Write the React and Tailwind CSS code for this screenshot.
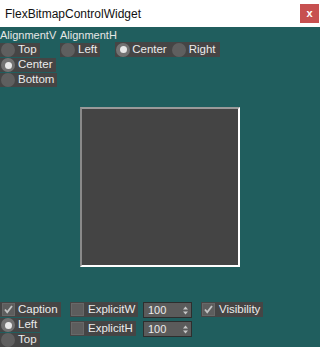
import React from 'react';

const font = "font-['Liberation_Sans',Arial,sans-serif]";

const Radio = ({ checked }) => (
    <span className={`w-[14px] h-[14px] rounded-full flex items-center justify-center shrink-0 ${checked ? 'bg-[#727272]' : 'bg-[#5f5f5f]'}`}>
        {checked && <span className="w-[7px] h-[7px] rounded-full bg-[#e8e8e8]" />}
    </span>
);

const Check = ({ checked }) => (
    <span className="w-[13px] h-[13px] bg-[#5d5d5d] border border-[#686868] flex items-center justify-center shrink-0">
        {checked && (
            <svg width="11" height="11" viewBox="0 0 11 11">
                <path d="M2 5.5 L4.2 8.3 L9 2" fill="none" stroke="#c4c4c4" strokeWidth="1.8" />
            </svg>
        )}
    </span>
);

const RadioItem = ({ label, checked }) => (
    <div className="h-[14px] flex items-center gap-[3px] pl-px pr-[3px] bg-[#454545] w-fit">
        <Radio checked={checked} />
        <span className="text-[11.5px] text-[#ececec] leading-none">{label}</span>
    </div>
);

const CheckItem = ({ label, checked }) => (
    <div className="h-[15px] flex items-center gap-[4px] pl-px pr-[3px] bg-[#454545] w-fit">
        <Check checked={checked} />
        <span className="text-[11.5px] text-[#ececec] leading-none">{label}</span>
    </div>
);

const SpinBox = ({ value }) => (
    <div className="w-[49px] h-[16px] bg-[#5b5b5b] border border-[#2e2e2e] flex items-center justify-between pl-[4px] pr-[3px]">
        <span className="text-[11px] text-[#ececec] leading-none">{value}</span>
        <svg width="5" height="9" viewBox="0 0 5 9">
            <path d="M2.5 0.5 L5 3.5 L0 3.5 Z" fill="#c8c8c8" />
            <path d="M2.5 8.5 L5 5.5 L0 5.5 Z" fill="#c8c8c8" />
        </svg>
    </div>
);

const App = () => {
    return (
        <div className={`w-[320px] h-[347px] bg-[#205e5e] flex flex-col overflow-hidden ${font}`}>
            {/* title bar */}
            <div className="h-[27px] bg-white flex items-center justify-between pl-[5px] pr-[1px] shrink-0">
                <span className="text-[12px] text-[#111]">FlexBitmapControlWidget</span>
                <div className="w-[19px] h-[19px] bg-[#c75050] flex items-center justify-center">
                    <span className="text-white text-[11px] font-bold leading-none">x</span>
                </div>
            </div>

            {/* alignment options */}
            <div className="flex">
                <div className="w-[60px] flex flex-col items-start">
                    <div className="h-[16px] flex items-center text-[11px] text-[#e6e6e6]">AlignmentV</div>
                    <div className="flex flex-col gap-px">
                        <RadioItem label="Top" />
                        <RadioItem label="Center" checked />
                        <RadioItem label="Bottom" />
                    </div>
                </div>
                <div className="flex flex-col items-start">
                    <div className="h-[16px] flex items-center text-[11px] text-[#e6e6e6]">AlignmentH</div>
                    <div className="flex gap-[15px]">
                        <RadioItem label="Left" />
                        <div className="h-[15px] -mt-px flex items-center pl-px pr-[4px] bg-[#454545]">
                            <Radio checked />
                            <span className="ml-[2px] text-[11.5px] text-[#ececec] leading-none">Center</span>
                            <span className="ml-[5px]"><Radio /></span>
                            <span className="ml-[3px] text-[11.5px] text-[#ececec] leading-none">Right</span>
                        </div>
                    </div>
                </div>
            </div>

            {/* bitmap */}
            <div className="mt-[20px] mx-auto w-[160px] h-[160px] bg-[#444444] border-2 border-t-[#9a9a9a] border-l-[#8a8a8a] border-r-white border-b-white" />

            {/* bottom controls */}
            <div className="mt-auto h-[45px] flex">
                <div className="w-[70px] flex flex-col gap-px">
                    <div className="h-[15px] flex items-center gap-[3px] pl-[2px] pr-[3px] bg-[#454545] w-fit">
                        <Check checked />
                        <span className="text-[11.5px] text-[#ececec] leading-none">Caption</span>
                    </div>
                    <RadioItem label="Left" checked />
                    <RadioItem label="Top" />
                </div>
                <div className="w-[73px] flex flex-col gap-[4px]">
                    <CheckItem label="ExplicitW" />
                    <CheckItem label="ExplicitH" />
                </div>
                <div className="w-[58px] flex flex-col gap-[3px]">
                    <SpinBox value="100" />
                    <SpinBox value="100" />
                </div>
                <div>
                    <CheckItem label="Visibility" checked />
                </div>
            </div>
        </div>
    );
};

export default App;
